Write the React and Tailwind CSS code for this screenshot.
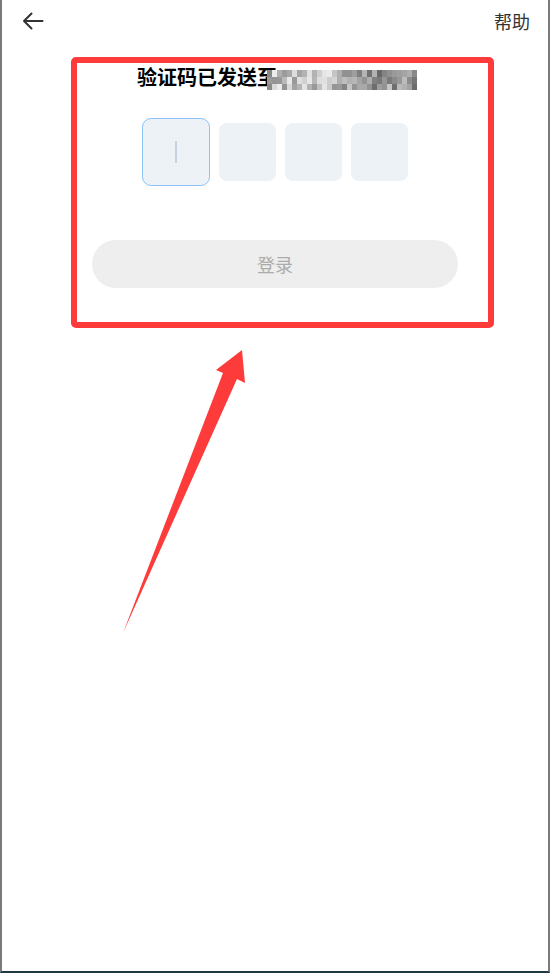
import React from 'react';

// mosaic shades for the blurred phone number
const shades = (() => {
  const out = [];
  let s = 11;
  for (let i = 0; i < 3 * 30; i++) {
    s = (s * 9301 + 49297) % 233280;
    const r = s / 233280;
    const col = i % 30;
    const base = col < 1 ? 70 : col < 15 ? 145 : 100;
    const v = Math.min(235, Math.round(base + r * 100));
    out.push(`rgb(${v},${v},${v})`);
  }
  return out;
})();

export default function App() {
  return (
    <div
      className="relative w-[550px] h-[973px] bg-white border-l-2 border-r-2 border-b-2 border-l-[#7a7a7a] border-r-[#7a7a7a] border-b-[#1f3a40] overflow-hidden"
      style={{ fontFamily: '"Noto Sans CJK SC", "Noto Sans", sans-serif' }}
    >
      {/* Top bar */}
      <div className="flex items-center justify-between h-[42px] pl-[20px] pr-[18px]">
        <svg width="22" height="18" viewBox="0 0 22 18" fill="none">
          <path d="M9.5 1.5 L2 9 L9.5 16.5 M2 9 H20.5" stroke="#333" strokeWidth="2" strokeLinecap="round" strokeLinejoin="round" />
        </svg>
        <span className="text-[18px] leading-none text-[#333]">帮助</span>
      </div>

      {/* Title */}
      <div className="mt-[22px] flex justify-center">
        <div className="flex items-center h-[26px] pl-[4px]">
          <span className="text-[20px] leading-[26px] font-bold text-black">验证码已发送至</span>
          <div className="-ml-[10px] mt-[6px] grid grid-cols-[repeat(30,5px)] grid-rows-[7px_7px_6px]">
            {shades.map((c, i) => (
              <div key={i} style={{ backgroundColor: c }} />
            ))}
          </div>
        </div>
      </div>

      {/* Code boxes */}
      <div className="mt-[28px] flex justify-center items-center gap-[9px]">
        <div className="w-[68px] h-[68px] rounded-[9px] border border-[#8fc3f5] bg-[#edf2f7] flex items-center justify-center">
          <div className="w-[2px] h-[22px] bg-[#c8d2de]" />
        </div>
        <div className="w-[57px] h-[58px] rounded-[8px] bg-[#edf2f7]" />
        <div className="w-[57px] h-[58px] rounded-[8px] bg-[#edf2f7]" />
        <div className="w-[57px] h-[58px] rounded-[8px] bg-[#edf2f7]" />
      </div>

      {/* Login button */}
      <div className="mt-[54px] mx-auto w-[366px] h-[48px] rounded-full bg-[#eeeeee] flex items-center justify-center">
        <span className="text-[18px] text-[#ababab]">登录</span>
      </div>

      {/* Annotation: red box */}
      <div className="absolute left-[69px] top-[57px] w-[423px] h-[271px] border-[6px] border-[#fe3b3b] rounded-[5px] pointer-events-none" />

      {/* Annotation: red arrow */}
      <svg className="absolute left-0 top-0 pointer-events-none" width="546" height="971" viewBox="2 0 546 971">
        <polygon points="123,633 237,379 245,383 242,350 216,370 223,373" fill="#fe3b3b" />
      </svg>
    </div>
  );
}
